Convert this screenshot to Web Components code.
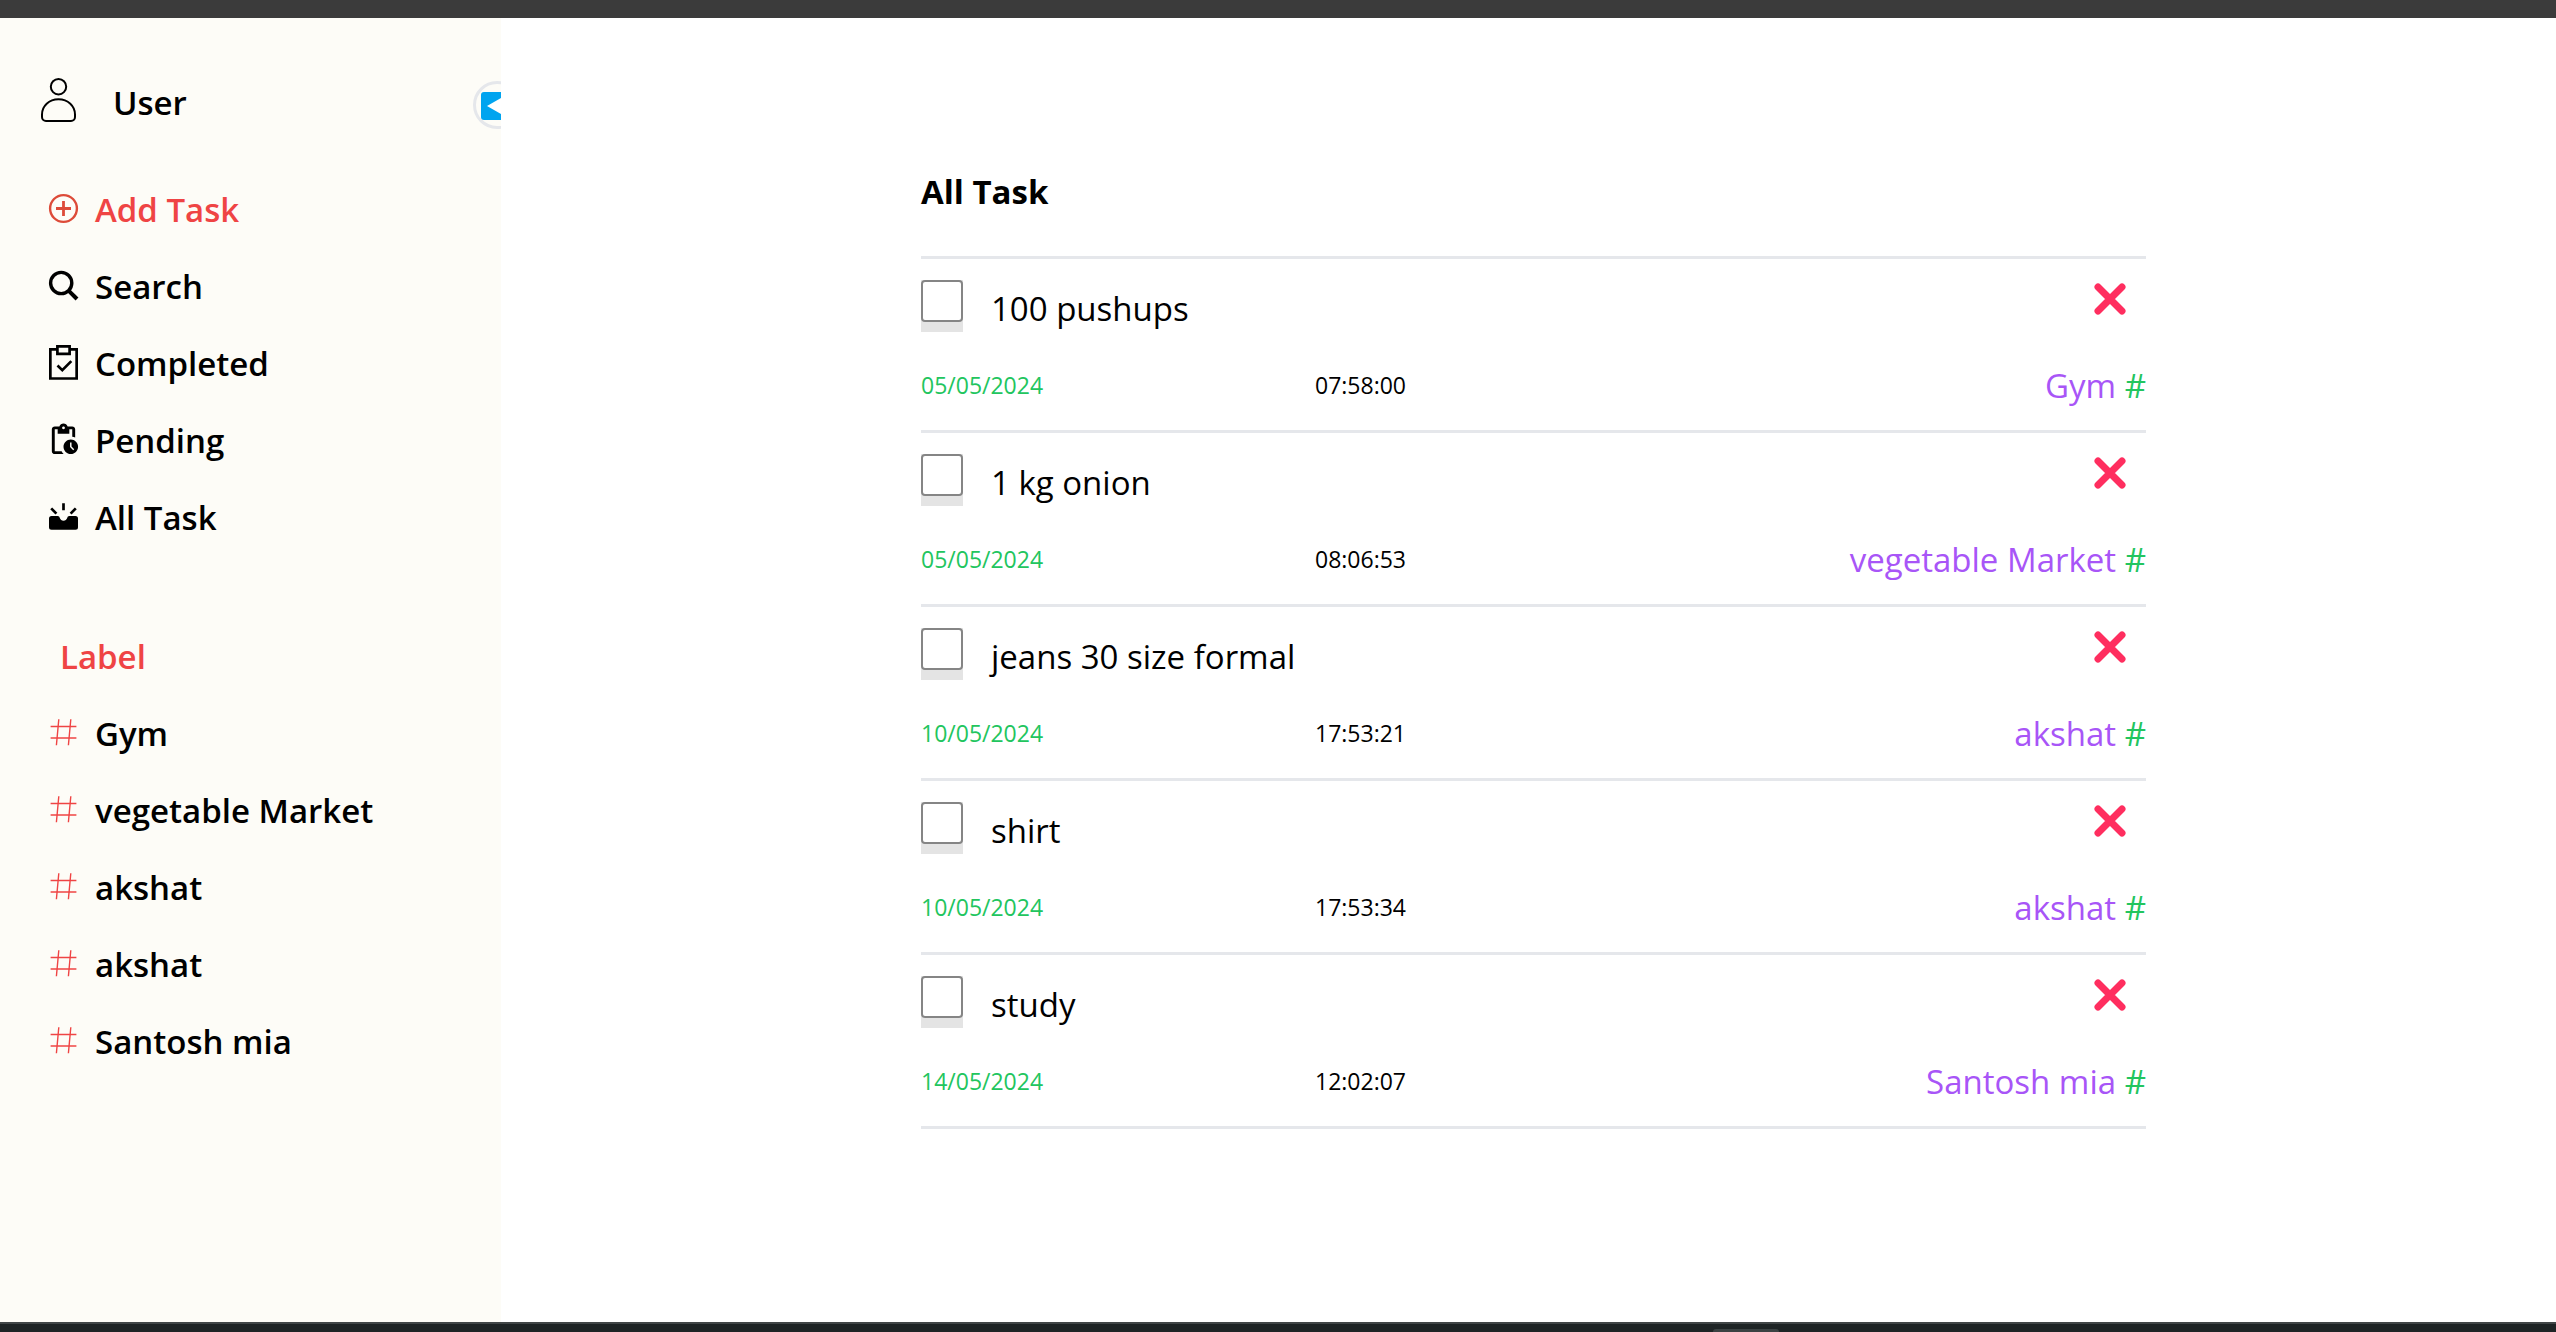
<!DOCTYPE html>
<html lang="en">
<head>
<meta charset="utf-8">
<title>All Task</title>
<style>
  body { margin: 0; font-family: "Open Sans", "Noto Sans", sans-serif; color: #000; background: #fff; }
</style>
</head>
<body>
<todo-app></todo-app>
<script>
const ICONS = {
  user: '<svg width="35" height="44" viewBox="0 0 35 44" fill="none" stroke="#000" stroke-width="2"><circle cx="17.5" cy="8.7" r="7.7"/><path d="M17.5 21.3C27 21.3 34 28 34 36.500v2.500a4 4 0 0 1-4 4H5a4 4 0 0 1-4-4v-2.500C1 28 8 21.300 17.500 21.300z"/></svg>',
  add: '<svg width="35" height="35" viewBox="0 0 35 35" fill="none" stroke="#dd4b39" stroke-width="2.4"><circle cx="17.500" cy="17.500" r="13.400"/><path d="M10 17.500h15M17.500 10v15" stroke-width="2.800"/></svg>',
  search: '<svg width="35" height="35" viewBox="0 0 35 35" fill="none" stroke="#000"><circle cx="15.200" cy="15" r="10.600" stroke-width="3.400"/><path d="M22.800 22.800L31 31" stroke-width="4"/></svg>',
  done: '<svg width="35" height="35" viewBox="0 0 35 35" fill="none" stroke="#000" stroke-width="2.700"><path d="M11 4.300H4.350v29.200h26.300V4.300H24"/><path d="M11.400 1.400h12.200v7.400H11.400z"/><path d="M11.500 20.500l4.800 4.600 9-9"/></svg>',
  pending: '<svg width="35" height="35" viewBox="0 0 24 24"><path d="M17 12c-2.760 0-5 2.240-5 5s2.240 5 5 5 5-2.240 5-5-2.240-5-5-5zm1.650 7.350L16.500 17.200V14h1v2.790l1.850 1.850-.7.71zM18 3h-3.180C14.400 1.840 13.300 1 12 1s-2.400.84-2.820 2H6c-1.100 0-2 .9-2 2v15c0 1.100.9 2 2 2h6.110a6.743 6.743 0 0 1-1.420-2H6V5h2v3h8V5h2v5.080c.71.1 1.380.31 2 .6V5c0-1.100-.9-2-2-2zm-6 2c-.55 0-1-.45-1-1s.45-1 1-1 1 .45 1 1-.45 1-1 1z"/></svg>',
  all: '<svg width="35" height="35" viewBox="0 0 35 35"><path d="M5.500 17h6.200c1.300 0 1.600.8 2 1.700.7 1.900 2 3 3.800 3s3.100-1.100 3.800-3c.4-.9.700-1.700 2-1.700h6.200a2.500 2.500 0 0 1 2.500 2.500v8.700a2.500 2.500 0 0 1-2.500 2.500h-24A2.500 2.500 0 0 1 3 28.200v-8.700A2.500 2.500 0 0 1 5.500 17z"/><path d="M17.500 4.300v7M5.200 9.400l5.200 5.200M29.800 9.400l-5.200 5.200" stroke="#000" stroke-width="2.700"/></svg>',
  hash: '<svg width="35" height="35" viewBox="0 0 35 35" fill="none" stroke="#ef4444" stroke-width="1.400"><path d="M12.800 4.300l-2.400 26M24.800 4.300l-2.400 26M4.600 11.500h25.800M4.600 23h25.800"/></svg>',
};

const shadow = (host, html) => { host.attachShadow({ mode: 'open' }).innerHTML = html; };

customElements.define('nav-item', class extends HTMLElement {
  connectedCallback() {
    shadow(this, `
      <style>
        :host { display: block; }
        a { display: flex; align-items: center; gap: 14px; height: 77px; padding-left: 46px;
            font-size: 33px; font-weight: 600; color: inherit; text-decoration: none; }
        svg { display: block; flex: none; margin-bottom: 3px; }
      </style>
      <a href="#">${ICONS[this.getAttribute('icon')]}<span><slot></slot></span></a>`);
  }
});

customElements.define('side-bar', class extends HTMLElement {
  connectedCallback() {
    shadow(this, `
      <style>
        :host { display: block; box-sizing: border-box; background: #fdfcf7; padding-top: 57px; overflow: hidden; }
        header { display: flex; align-items: center; height: 54px; margin: 0 0 42px; padding-left: 41px;
                 font-size: 33px; font-weight: 600; }
        header > svg { margin-bottom: 4px; }
        .name { flex: 1; margin-left: 37px; }
        button { align-self: flex-end; flex: none; box-sizing: border-box; width: 48px; height: 48px; padding: 2px 0 0;
                 margin-right: -20px; border: 3px solid #e5e7eb; border-radius: 24px; background: #fdfcf7;
                 display: flex; align-items: center; justify-content: center; }
        .add { color: #ef4444; }
        h2 { margin: 62px 0 0; padding-left: 60px; font-size: 33px; font-weight: 600; line-height: 77px; color: #ef4444; }
      </style>
      <header>
        ${ICONS.user}<span class="name">User</span>
        <button aria-label="Collapse sidebar"><svg width="32" height="28" viewBox="0 0 32 28"><rect width="32" height="28" rx="3" fill="#00a4ef"/><path d="M6 14L20 6v16z" fill="#fff"/></svg></button>
      </header>
      <nav>
        <nav-item class="add" icon="add">Add Task</nav-item>
        <nav-item icon="search">Search</nav-item>
        <nav-item icon="done">Completed</nav-item>
        <nav-item icon="pending">Pending</nav-item>
        <nav-item icon="all">All Task</nav-item>
      </nav>
      <h2>Label</h2>
      <nav>
        <nav-item icon="hash">Gym</nav-item>
        <nav-item icon="hash">vegetable Market</nav-item>
        <nav-item icon="hash">akshat</nav-item>
        <nav-item icon="hash">akshat</nav-item>
        <nav-item icon="hash">Santosh mia</nav-item>
      </nav>`);
  }
});

customElements.define('task-item', class extends HTMLElement {
  connectedCallback() {
    const at = n => this.getAttribute(n);
    shadow(this, `
      <style>
        :host { display: block; padding: 21px 0; border-bottom: 3px solid #e5e7eb; }
        .top { display: flex; align-items: flex-start; height: 58px; margin-bottom: 24px; }
        .box { width: 42px; height: 52px; background: #e4e4e4; }
        input { appearance: none; display: block; box-sizing: border-box; width: 42px; height: 42px; margin: 0;
                border: 2px solid #858585; border-radius: 4px; background: #fff; }
        label { flex: 1; margin-left: 28px; font-size: 33px; line-height: 58px; }
        button { margin: 3px 20px 0 0; padding: 0; border: 0; background: none; }
        svg { display: block; }
        .meta { display: grid; grid-template-columns: 394fr 831fr; height: 47px; line-height: 47px; font-size: 23px; }
        .date { color: #22c55e; }
        .last { display: flex; justify-content: space-between; }
        .tag { font-size: 33px; color: #a855f7; }
        .tag b { font-weight: 400; color: #22c55e; }
      </style>
      <div class="top">
        <div class="box"><input type="checkbox" id="done"></div>
        <label for="done"><slot></slot></label>
        <button aria-label="Delete task"><svg width="32" height="32" viewBox="0 0 32 32"><path d="M4 4l24 24M28 4L4 28" stroke="#ff2e5f" stroke-width="7" stroke-linecap="round"/></svg></button>
      </div>
      <div class="meta">
        <span class="date">${at('date')}</span>
        <div class="last"><span>${at('time')}</span><span class="tag">${at('tag')} <b>#</b></span></div>
      </div>`);
  }
});

customElements.define('task-list', class extends HTMLElement {
  connectedCallback() {
    shadow(this, `
      <style>
        :host { display: block; }
        h1 { margin: 0; padding: 146px 0 36px; font-size: 33px; line-height: 56px; font-weight: 700; border-bottom: 3px solid #e5e7eb; }
      </style>
      <h1>All Task</h1>
      <slot></slot>`);
  }
});

customElements.define('todo-app', class extends HTMLElement {
  connectedCallback() {
    shadow(this, `
      <style>
        :host { display: flex; flex-direction: column; min-height: 100vh; }
        .head { height: 18px; background: #3b3b3b; }
        .body { flex: 1; display: flex; }
        side-bar { flex: none; width: 501px; }
        main { flex: 1; display: grid; grid-template-columns: 420fr 1225fr 410fr; }
        task-list { grid-column: 2; }
        .foot { box-sizing: border-box; height: 10px; padding-top: 5px; border-top: 2px solid #414647; background: #1e2425; }
        .tab { width: 66px; height: 3px; margin-left: 67%; border-radius: 4px 4px 0 0; background: #3b4243; }
      </style>
      <div class="head"></div>
      <div class="body">
        <side-bar></side-bar>
        <main>
          <task-list>
            <task-item date="05/05/2024" time="07:58:00" tag="Gym">100 pushups</task-item>
            <task-item date="05/05/2024" time="08:06:53" tag="vegetable Market">1 kg onion</task-item>
            <task-item date="10/05/2024" time="17:53:21" tag="akshat">jeans 30 size formal</task-item>
            <task-item date="10/05/2024" time="17:53:34" tag="akshat">shirt</task-item>
            <task-item date="14/05/2024" time="12:02:07" tag="Santosh mia">study</task-item>
          </task-list>
        </main>
      </div>
      <div class="foot"><div class="tab"></div></div>`);
  }
});
</script>
</body>
</html>
